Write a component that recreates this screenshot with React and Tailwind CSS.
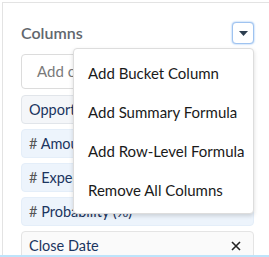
import React from 'react';

const rows = [
  { label: 'Opportunity Name', kind: 'text' },
  { label: '# Amount', kind: 'num' },
  { label: '# Expected Revenue', kind: 'num' },
  { label: '# Probability (%)', kind: 'num' },
  { label: 'Close Date', kind: 'date' },
];

const menu = ['Add Bucket Column', 'Add Summary Formula', 'Add Row-Level Formula', 'Remove All Columns'];

export default function App() {
  return (
    <div className="w-[269px] h-[257px] bg-white relative overflow-hidden" style={{ fontFamily: 'Lato, "Noto Sans", sans-serif' }}>
      <div className="h-[255px] overflow-hidden pt-[2px] pl-[2px]">
        <div className="h-[260px] border-t border-l border-[#e3e3e3] pl-[18px] pr-[15px] pt-[19px]">
          {/* Header */}
          <div className="flex items-center justify-between h-[22px]">
            <span className="text-[16px] font-semibold text-[#62676d]">Columns</span>
            <button className="w-[22px] h-[22px] rounded-[4px] bg-white border border-[#9fc3f0] shadow-[0_0_2px_#7fb2ee] flex items-center justify-center">
              <svg width="9" height="5" viewBox="0 0 9 5"><path d="M0 0h9L4.5 5z" fill="#2d3e50" /></svg>
            </button>
          </div>

          {/* Search input */}
          <div className="mt-[10px] h-[35px] rounded-[4px] border border-[#dcdcdc] flex items-center pl-[15px] text-[15px] text-[#7a7a7a]">
            Add columns...
          </div>

          {/* Column list */}
          <div className="mt-[6px] flex flex-col gap-[5px]">
            {rows.map((r) => (
              <div
                key={r.label}
                className={
                  r.kind === 'num'
                    ? 'h-[29px] rounded-[4px] bg-[#edf4fc] border border-[#e4eef9] flex items-center pl-[7px] pr-[12px] text-[14.5px] text-[#1b3560]'
                    : r.kind === 'text'
                    ? 'h-[29px] rounded-[4px] bg-[#f4f6f9] border border-[#e1e5ea] flex items-center pl-[7px] pr-[12px] text-[14.5px] text-[#1b3560]'
                    : 'h-[29px] rounded-[4px] bg-[#fafafa] border border-[#e4e4e4] flex items-center justify-between pl-[7px] pr-[12px] text-[14.5px] text-[#1b3560]'
                }
              >
                <span>{r.kind === 'num' ? <><span className="text-[#555]">#</span>{r.label.slice(1)}</> : r.label}</span>
                {r.kind === 'date' && (
                  <svg width="10" height="10" viewBox="0 0 10 10"><path d="M1 1l8 8M9 1l-8 8" stroke="#222" strokeWidth="1.6" /></svg>
                )}
              </div>
            ))}
          </div>
        </div>
      </div>
      <div className="h-[2px] bg-[#bde4fb]" />

      {/* Dropdown menu */}
      <div className="absolute left-[73px] top-[48px] w-[181px] h-[166px] rounded-[4px] bg-white border border-[#dddddd] shadow-[0_2px_4px_rgba(0,0,0,0.15)] py-[5px]">
        {menu.map((m) => (
          <div key={m} className="h-[39px] flex items-center pl-[14px] text-[15px] text-[#1a1a1a]">
            {m}
          </div>
        ))}
      </div>
    </div>
  );
}
